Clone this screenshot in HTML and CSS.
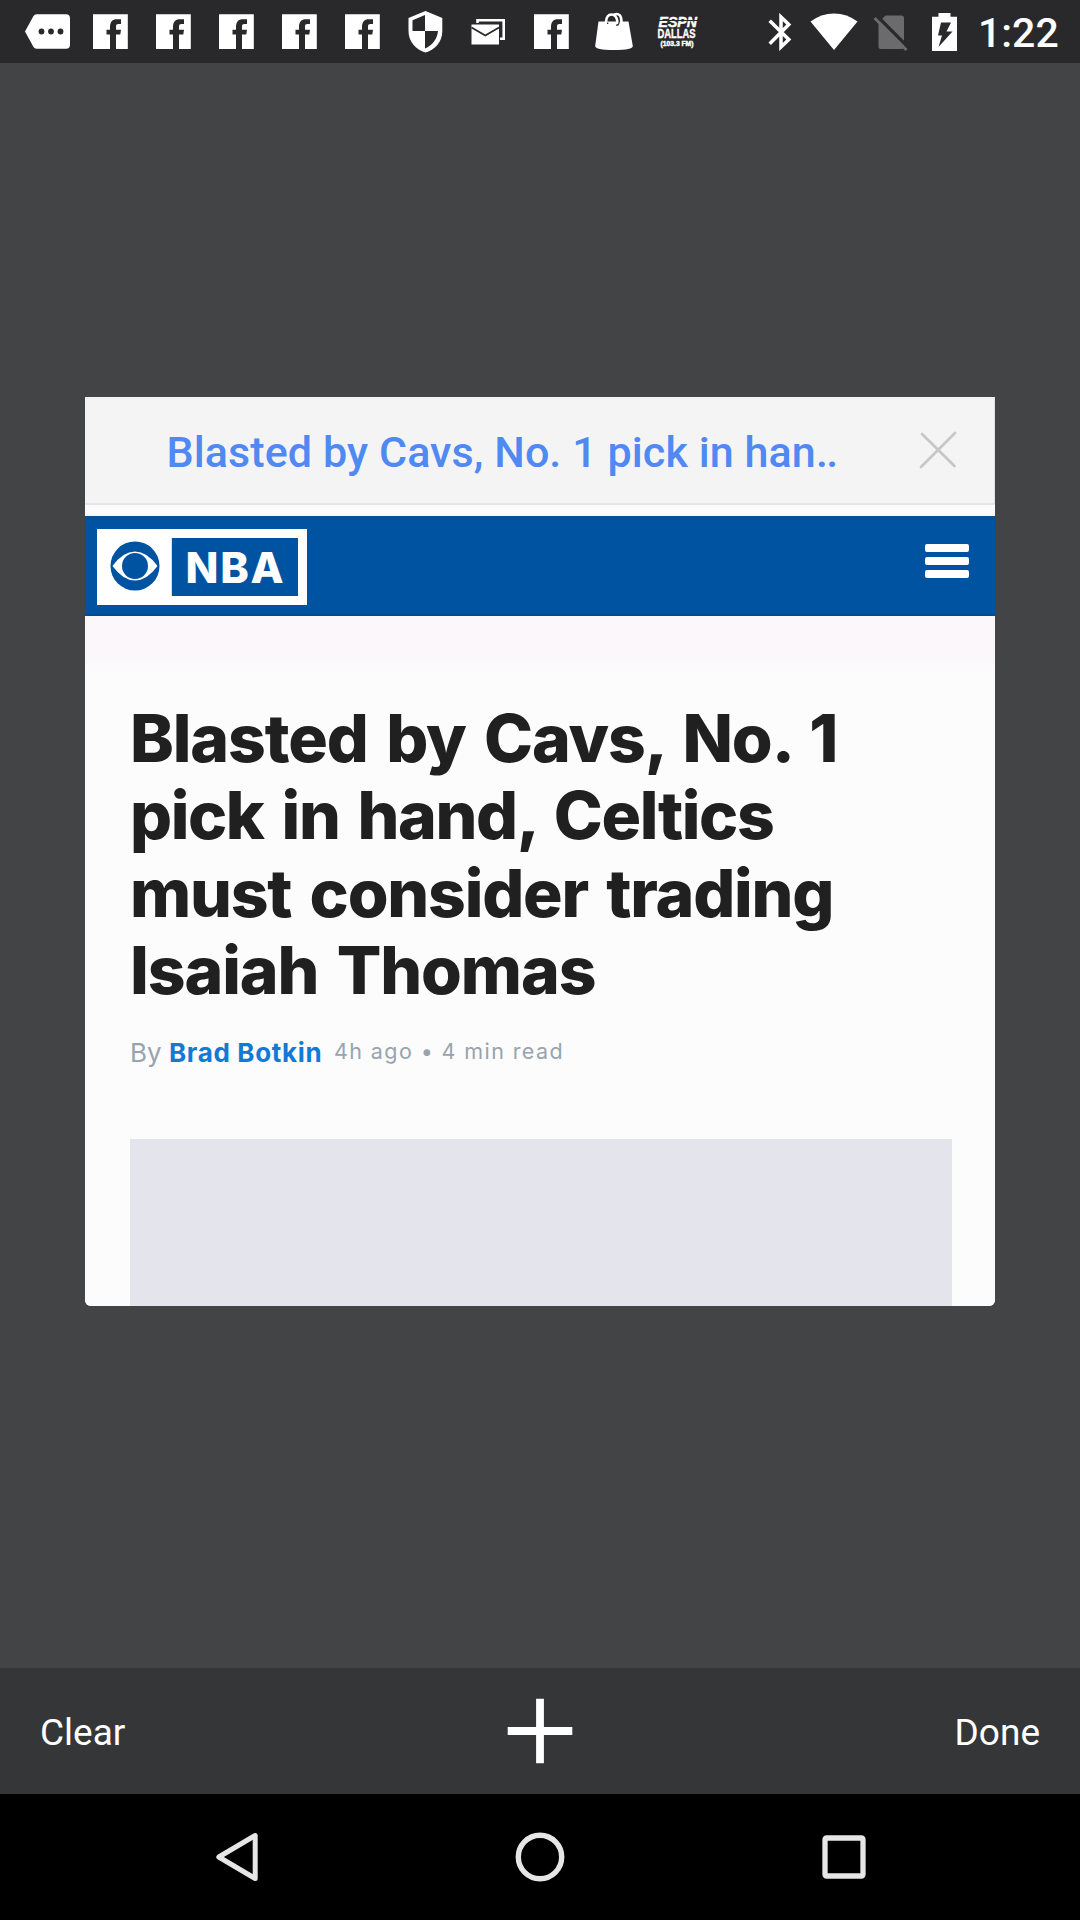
FILE: index.html
```html
<!DOCTYPE html>
<html lang="en">
<head>
<meta charset="utf-8">
<title>Open tabs</title>
<link rel="stylesheet" href="styles.css">
</head>
<body>
<svg class="defs" aria-hidden="true">
  <symbol id="fb" viewBox="0 0 63 63"><path fill="#fff" fill-rule="evenodd" d="M14 14.3H48.8V49H14zM31 49V34.6H27.5V29.8H31V27C31 21.8 33.5 19.2 37.8 19.2H42V24H39.5C37.7 24 37 24.8 37 26.600V29.800H42L41.300 34.600H37V49z"/></symbol>
</svg>
<div class="screen">
  <header class="status">
    <div class="notifications">
      <svg class="slot" viewBox="0 0 63 63"><path fill="#fff" d="M20.500 14.300H50Q54 14.300 54 18.300V44.700Q54 48.700 50 48.700H20.500Q18.500 48.700 17.500 47L9 31.500L17.500 16Q18.500 14.300 20.500 14.300z"/><g fill="#29292b"><circle cx="25.500" cy="31.500" r="2.900"/><circle cx="35" cy="31.500" r="2.900"/><circle cx="44.500" cy="31.500" r="2.900"/></g></svg>
      <svg class="slot"><use href="#fb"/></svg>
      <svg class="slot"><use href="#fb"/></svg>
      <svg class="slot"><use href="#fb"/></svg>
      <svg class="slot"><use href="#fb"/></svg>
      <svg class="slot"><use href="#fb"/></svg>
      <svg class="slot" viewBox="0 0 63 63"><path fill="#fff" d="M31.500 11L48.300 18V31C48.300 41.500 41.200 50 31.500 52.500C21.800 50 14.500 41.500 14.500 31V18z"/><path fill="#29292b" d="M31 15V31H18.500V20.200zM31 31H44C43.200 39 38.500 45.500 31 48.400z"/></svg>
      <svg class="slot" viewBox="0 0 63 63"><path fill="none" stroke="#fff" stroke-width="2.600" d="M20.500 23V20.200H46.700V38.700H43"/><path fill="#fff" d="M14.500 24.500H42V44.500H14.500z"/><path fill="none" stroke="#29292b" stroke-width="1.800" d="M14.500 27.500L28.300 35.500L42 27.500"/></svg>
      <svg class="slot"><use href="#fb"/></svg>
      <svg class="slot" viewBox="0 0 63 63"><path fill="#fff" d="M15.500 21.500H45.500L49.800 46Q49.800 50 31 50Q12.200 50 12.200 46z"/><g fill="none" stroke="#fff" stroke-width="2.600"><path d="M23 22Q23.500 14.500 28.500 14.500Q33.500 14.500 34.500 22V24M31 14.500Q38.500 12 38.500 22"/></g><path fill="none" stroke="#29292b" stroke-width="1.200" d="M24.700 22.500V24M36.300 21Q36 26 33 25"/></svg>
      <svg class="slot espn" viewBox="0 0 63 63"><text x="12.500" y="27" font-size="14.500" textLength="38.500" lengthAdjust="spacingAndGlyphs">ESPN</text><path stroke="#29292b" stroke-width="1" d="M12 20.500H52"/><text class="upright" x="11.500" y="38.200" font-size="13.500" textLength="38" lengthAdjust="spacingAndGlyphs">DALLAS</text><text class="upright" x="14.500" y="45.500" font-size="6.500" textLength="33" lengthAdjust="spacingAndGlyphs">(103.3 FM)</text></svg>
    </div>
    <div class="system">
      <svg class="bt" viewBox="0 0 24 38" width="24" height="38"><path fill="none" stroke="#fff" stroke-width="3.500" d="M1.700 7.800L20.800 26.600L13 34V4L20.800 11.500L1.700 30.800"/></svg>
      <svg class="wifi" viewBox="0 0 48 38" width="48" height="38"><path fill="#fff" d="M24 37L.500 8.600Q11 .400 24 .400T47.500 8.600z"/></svg>
      <svg class="sim" viewBox="0 0 36 38" width="36" height="38"><path fill="#6b6b6d" d="M12.500 2.500H28.500Q31 2.500 31 5V33.500Q31 36 28.500 36H8Q5.500 36 5.500 33.500V9.500z"/><path stroke="#29292b" stroke-width="3.200" d="M3 2L36 35"/><path stroke="#6b6b6d" stroke-width="2.900" d="M1.500 5L33.500 37"/></svg>
      <svg class="battery" viewBox="0 0 25 38" width="25" height="38"><path fill="#fff" d="M6.500 0H18.500V3.800H25V38H0V3.800H6.500z"/><path fill="#29292b" d="M9 9.500H19L14.500 18.500H20.500L6.500 34L10 22.500H6z"/></svg>
      <span class="clock">1:22</span>
    </div>
  </header>

  <main class="switcher">
    <article class="tab-card">
      <div class="tab-title">
        <span class="tab-name">Blasted by Cavs, No. 1 pick in han<span class="dots">..</span></span>
        <svg class="close" viewBox="0 0 38 38" width="38" height="38"><path fill="none" stroke="#c6c6c6" stroke-width="2.700" stroke-linecap="round" d="M3 3L35.500 35M36 2L2 36"/></svg>
      </div>
      <div class="site-bar">
        <div class="logo">
          <svg class="eye" viewBox="0 0 50 50" width="50" height="50"><circle cx="25" cy="25" r="24.500" fill="#0053a1"/><path fill="#fff" d="M2.500 25Q13 10.500 25 10.500T47.500 25Q37 39.500 25 39.500T2.500 25z"/><circle cx="25" cy="25" r="13" fill="#0053a1"/></svg>
          <div class="league"><span>NBA</span></div>
        </div>
        <div class="menu"><i></i><i></i><i></i></div>
      </div>
      <div class="story">
        <h1><span class="l1">Blasted by Cavs, No. 1</span><span class="l2">pick in hand, Celtics</span><span class="l3">must consider trading</span><span class="l4">Isaiah Thomas</span></h1>
        <div class="byline"><span class="by">By</span><span class="author">Brad Botkin</span><span class="meta">4h ago • 4 min read</span></div>
        <div class="media"></div>
      </div>
    </article>
  </main>

  <footer class="toolbar">
    <span class="clear">Clear</span>
    <svg viewBox="0 0 66 66" width="66" height="66"><path stroke="#fff" stroke-width="7.800" d="M33 .700V65.300M.700 33H65.300"/></svg>
    <span class="done">Done</span>
  </footer>
  <nav class="nav">
    <svg viewBox="0 0 50 50" width="50" height="50"><path fill="none" stroke="#e6e6e6" stroke-width="5" stroke-linejoin="round" d="M44.200 3.500V46.500L7.800 25z"/></svg>
    <svg viewBox="0 0 50 50" width="50" height="50"><circle cx="25" cy="25" r="21.700" fill="none" stroke="#e6e6e6" stroke-width="5.400"/></svg>
    <svg viewBox="0 0 50 50" width="50" height="50"><rect x="6" y="6" width="38" height="38" rx="1.500" fill="none" stroke="#e6e6e6" stroke-width="5.300"/></svg>
  </nav>
</div>
</body>
</html>
```
FILE: styles.css
```css
* { box-sizing: border-box; }
body { margin: 0; background: #434446; font-family: Roboto, sans-serif; }
svg { display: block; flex: none; }
.defs { display: none; }
.screen { width: 1080px; height: 1920px; display: flex; flex-direction: column; overflow: hidden; }

.status { height: 63px; flex: none; display: flex; justify-content: space-between; background: #29292b; padding: 0 22px 0 16px; }
.notifications { display: flex; }
.slot { width: 63px; height: 63px; }
.espn text { fill: #fff; stroke: #fff; stroke-width: .4px; font-family: "Liberation Sans", sans-serif; font-weight: 700; font-style: italic; }
.espn .upright { font-style: normal; }
.system { display: flex; align-items: center; }
.wifi { margin-left: 18px; }
.sim { margin-left: 15px; }
.battery { margin: 0 21px 0 23px; }
.clock { width: 80px; color: #fff; font-size: 41px; line-height: 63px; font-weight: 500; padding-top: 3px; white-space: nowrap; }

.switcher { flex: 1; min-height: 0; display: flex; flex-direction: column; align-items: center; padding-top: 334px; }
.tab-card { width: 910px; height: 908.500px; overflow: hidden; border-radius: 1px 1px 6px 6px; background: #fcfcfc; }
.tab-title { height: 108px; display: flex; align-items: center; justify-content: space-between; background: #f4f4f4; border-bottom: 2px solid #e7e3e9; padding: 0 37px 0 81.500px; border-right: 1px solid #dfe3ee; }
.tab-name { color: #4f89f1; font-size: 43px; font-weight: 500; line-height: 50px; letter-spacing: .1px; white-space: nowrap; padding-top: 4px; }
.dots { letter-spacing: -1.500px; }
.site-bar { height: 100px; margin-top: 11px; display: flex; justify-content: space-between; background: #0053a1; border-top: 4px solid #064f93; border-bottom: 2px solid #034b92; padding: 9px 26px 0 12px; box-shadow: 0 3px 7px #e5e2e8; }
.logo { width: 210px; height: 76px; display: flex; align-items: center; background: #fff; padding: 9px 9px 9px 13px; }
.eye { margin-top: -2px; }
.league { width: 126px; height: 58px; margin-left: 12px; background: #0053a1; color: #fff; font: 800 43px/58px Inter, sans-serif; letter-spacing: 1.800px; padding-left: 13.500px; box-shadow: -1px 0 #d5e3e5; }
.menu { width: 44px; margin-top: 15px; display: flex; flex-direction: column; gap: 5px; }
.menu i { height: 8px; border-radius: 2px; background: #fff; }
.story { padding: 84px 43px 0 45px; font-family: Inter, sans-serif; background: linear-gradient(#fbf7fb 0, #fbf8fb 38px, #fcfcfc 60px); }
h1 { margin: 0; font-size: 66px; line-height: 77.300px; font-weight: 800; color: #202020; word-spacing: 5px; }
h1 span { display: block; white-space: nowrap; }
.l1 { letter-spacing: -1.100px; }
.l2 { letter-spacing: -1.400px; }
.l3 { letter-spacing: -1.200px; }
.l4 { letter-spacing: -1.100px; }
.byline { height: 130px; display: flex; align-items: flex-start; padding-top: 24px; font-size: 26px; line-height: 40px; white-space: nowrap; color: #98a4ad; }
.by { width: 39px; }
.author { width: 165px; color: #127ad5; font-weight: 700; letter-spacing: .650px; }
.meta { font-size: 21.500px; letter-spacing: 1.400px; line-height: 36px; }
.media { height: 200px; background: #e4e4ec; }

.toolbar { height: 126px; flex: none; display: grid; grid-template-columns: 1fr 66px 1fr; align-items: center; background: #353638; color: #fff; font-size: 37px; line-height: 44px; padding: 0 40px; }
.toolbar span { padding-top: 3px; }
.done { text-align: right; }
.nav { height: 126px; flex: none; display: flex; justify-content: space-between; align-items: center; background: #000; padding: 0 211px; }
```
